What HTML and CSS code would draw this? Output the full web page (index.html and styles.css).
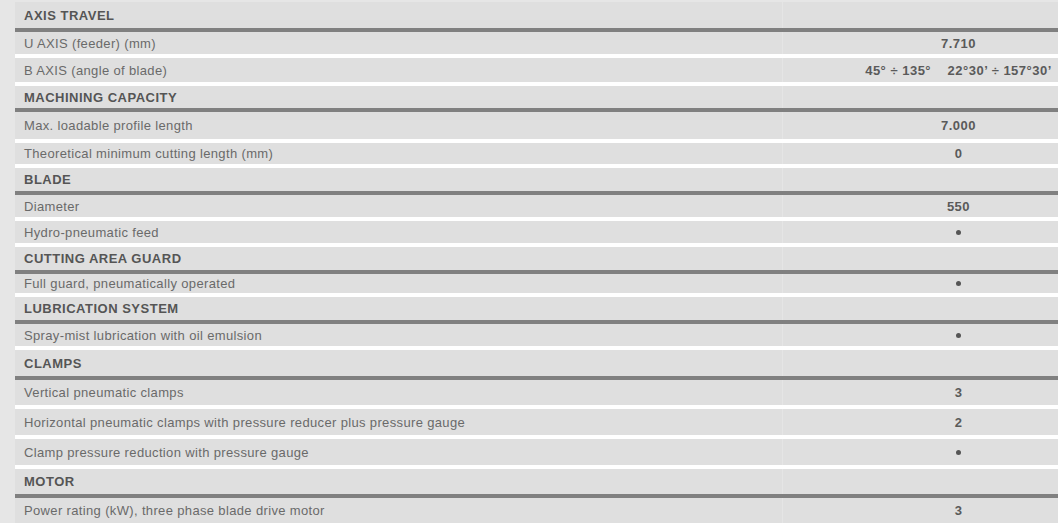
FILE: index.html
```html
<!DOCTYPE html>
<html>
<head>
<meta charset="utf-8">
<link rel="stylesheet" href="styles.css">
</head>
<body>
<div class="spec">
  <div class="row sec h30"><div class="label">AXIS TRAVEL</div><div class="val"></div></div>
  <div class="row item h26"><div class="label">U AXIS (feeder) (mm)</div><div class="val">7.710</div></div>
  <div class="row item h28"><div class="label">B AXIS (angle of blade)</div><div class="val">45° ÷ 135°&nbsp;&nbsp;&nbsp;&nbsp;22°30’ ÷ 157°30’</div></div>
  <div class="row sec h26"><div class="label">MACHINING CAPACITY</div><div class="val"></div></div>
  <div class="row item h31"><div class="label">Max. loadable profile length</div><div class="val">7.000</div></div>
  <div class="row item h25"><div class="label">Theoretical minimum cutting length (mm)</div><div class="val">0</div></div>
  <div class="row sec h27"><div class="label">BLADE</div><div class="val"></div></div>
  <div class="row item h26"><div class="label">Diameter</div><div class="val">550</div></div>
  <div class="row item h26"><div class="label">Hydro-pneumatic feed</div><div class="val"><span class="dot"></span></div></div>
  <div class="row sec h27"><div class="label">CUTTING AREA GUARD</div><div class="val"></div></div>
  <div class="row item h23"><div class="label">Full guard, pneumatically operated</div><div class="val"><span class="dot"></span></div></div>
  <div class="row sec h27"><div class="label">LUBRICATION SYSTEM</div><div class="val"></div></div>
  <div class="row item h26"><div class="label">Spray-mist lubrication with oil emulsion</div><div class="val"><span class="dot"></span></div></div>
  <div class="row sec h30"><div class="label">CLAMPS</div><div class="val"></div></div>
  <div class="row item h29"><div class="label">Vertical pneumatic clamps</div><div class="val">3</div></div>
  <div class="row item h30"><div class="label">Horizontal pneumatic clamps with pressure reducer plus pressure gauge</div><div class="val">2</div></div>
  <div class="row item h30"><div class="label">Clamp pressure reduction with pressure gauge</div><div class="val"><span class="dot"></span></div></div>
  <div class="row sec h29"><div class="label">MOTOR</div><div class="val"></div></div>
  <div class="row item h25 last"><div class="label">Power rating (kW), three phase blade drive motor</div><div class="val">3</div></div>
</div>
</body>
</html>
```
FILE: styles.css
```css
html, body {
  margin: 0;
  padding: 0;
}
body {
  background: #e6e6e6;
  padding: 2px 0 0 15px;
  overflow: hidden;
  font-family: "Liberation Sans", Arial, sans-serif;
  font-size: 13px;
}
.spec {
  width: 1043px;
  display: flex;
  flex-direction: column;
}
.row {
  display: flex;
  box-sizing: border-box;
  background: #dfdfdf;
}
.row > div {
  display: flex;
  align-items: center;
  white-space: nowrap;
}
.label {
  width: 767px;
  box-sizing: border-box;
  padding-left: 9px;
  color: #6a6a6a;
  letter-spacing: 0.35px;
  flex: none;
}
.val {
  flex: 1;
  box-sizing: border-box;
  padding-left: 76px;
  justify-content: center;
  font-weight: bold;
  color: #5a5a5a;
  border-left: 1px solid #e5e5e5;
  letter-spacing: 0.5px;
}
.sec {
  border-bottom: 4px solid #808080;
}
.sec .label {
  font-weight: bold;
  color: #555555;
  letter-spacing: 0.5px;
}
.item {
  border-bottom: 4px solid #ffffff;
}
.item.last {
  border-bottom: 0;
}
.h23 { height: 23px; }
.h25 { height: 25px; }
.h26 { height: 26px; }
.h27 { height: 27px; }
.h28 { height: 28px; }
.h29 { height: 29px; }
.h30 { height: 30px; }
.h31 { height: 31px; }
.dot {
  display: inline-block;
  width: 5px;
  height: 5px;
  border-radius: 50%;
  background: #555555;
}
```
